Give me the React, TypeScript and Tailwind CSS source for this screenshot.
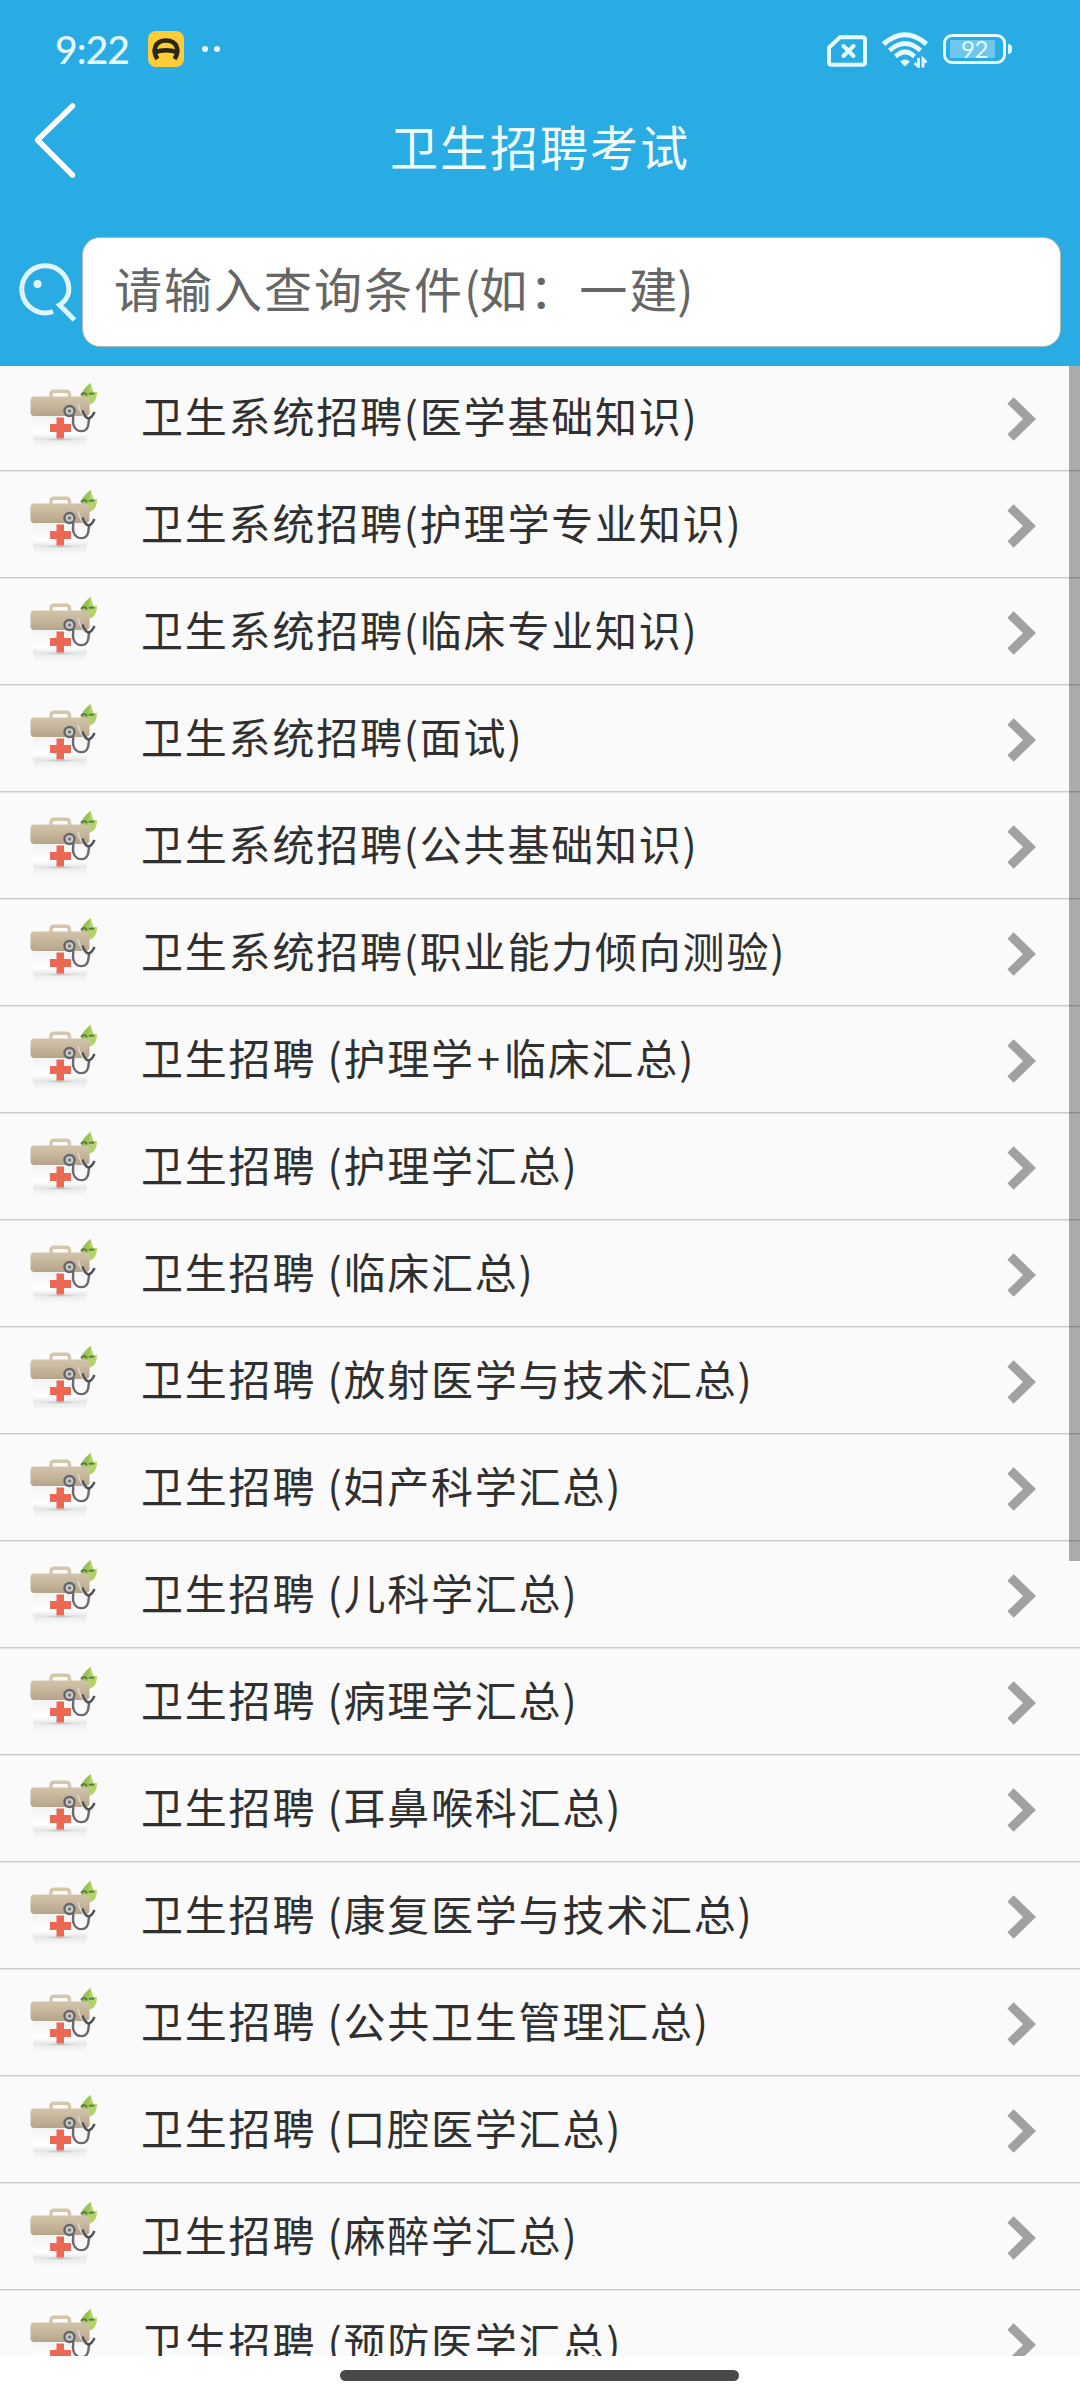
const categories = [
  "卫生系统招聘(医学基础知识)",
  "卫生系统招聘(护理学专业知识)",
  "卫生系统招聘(临床专业知识)",
  "卫生系统招聘(面试)",
  "卫生系统招聘(公共基础知识)",
  "卫生系统招聘(职业能力倾向测验)",
  "卫生招聘 (护理学+临床汇总)",
  "卫生招聘 (护理学汇总)",
  "卫生招聘 (临床汇总)",
  "卫生招聘 (放射医学与技术汇总)",
  "卫生招聘 (妇产科学汇总)",
  "卫生招聘 (儿科学汇总)",
  "卫生招聘 (病理学汇总)",
  "卫生招聘 (耳鼻喉科汇总)",
  "卫生招聘 (康复医学与技术汇总)",
  "卫生招聘 (公共卫生管理汇总)",
  "卫生招聘 (口腔医学汇总)",
  "卫生招聘 (麻醉学汇总)",
  "卫生招聘 (预防医学汇总)",
]

function StatusBar() {
  return (
    <div className="flex h-[98px] items-center justify-between pl-[55px] pr-[68px] text-[#e6fbff]">
      <div className="flex items-center">
        <span className="w-[93px] whitespace-nowrap font-['Lato',sans-serif] text-[39px] font-medium leading-none tracking-[-0.9px]">9:22</span>
        <svg className="h-9 w-9" viewBox="0 0 36 36">
          <rect width="36" height="36" rx="8" fill="#fdcc36" />
          <path d="M9.500 28C4 20 6.500 9.500 18 9.500s14 10.500 8.500 18.500" fill="none" stroke="#2b2617" strokeWidth="4.500" />
          <path d="M7 21Q18 17.500 29 21" fill="none" stroke="#2b2617" strokeWidth="4.500" />
        </svg>
        <span className="ml-[18px] h-1.5 w-1.5 rounded-full bg-[#e6fbff]"></span>
        <span className="ml-[6px] h-1.5 w-1.5 rounded-full bg-[#e6fbff]"></span>
      </div>

      <div className="flex items-center">
        <svg className="mt-[3px] h-[32px] w-[40px]" viewBox="0 0 40 32" fill="none" stroke="currentColor">
          <path d="M13 2.200H35.500Q38 2.200 38 4.700V27.300Q38 29.800 35.500 29.800H4.500Q2 29.800 2 27.300V12.500Z" strokeWidth="4" strokeLinejoin="round" />
          <path d="M16.500 11L26.500 21M26.500 11L16.500 21" strokeWidth="4" strokeLinecap="round" />
        </svg>
        <svg className="ml-[15px] mt-[1px] h-[36px] w-[46px]" viewBox="0 0 46 36" fill="none" stroke="currentColor">
          <path d="M1.500 12Q23 -6.500 44.500 12" strokeWidth="5" />
          <path d="M7.500 18.500Q23 4.500 38.500 18.500" strokeWidth="4.600" />
          <path d="M13.500 24.500Q23 15.500 32.500 24.500" strokeWidth="4.600" />
          <path d="M18 29.500Q23 25.500 28 29.500L23 34.500Z" fill="currentColor" stroke="none" />
          <path d="M36.500 26V34.500L32.500 31M41 35.500V27L44.500 30.500" strokeWidth="2.800" />
        </svg>
        <div className="ml-[15px] flex h-[30px] w-[63px] items-center rounded-[9px] border-3 border-[#e6fbff] pl-[4px]">
          <div className="flex h-[18px] w-[45px] items-center justify-center bg-[#6fc6ee] pl-[4px] font-['Lato',sans-serif] text-[24px] leading-none tracking-[-0.500px]">92</div>
        </div>
        <span className="ml-[2px] h-[10px] w-[4px] rounded-r bg-[#e6fbff]"></span>
      </div>
    </div>
  )
}

// First-aid case with a stethoscope and a leaf
function MedicalCaseIcon() {
  return (
    <svg className="ml-5 h-[90px] w-[90px] shrink-0" viewBox="0 0 90 90">
      <defs>
        <linearGradient id="lid" x1="0" y1="0" x2="0" y2="1">
          <stop offset="0" stopColor="#d2c4aa" />
          <stop offset="0.500" stopColor="#c5b69b" />
          <stop offset="1" stopColor="#b3a48a" />
        </linearGradient>
        <linearGradient id="body" x1="0" y1="0" x2="0" y2="1">
          <stop offset="0" stopColor="#f1f1f1" />
          <stop offset="0.750" stopColor="#ffffff" />
          <stop offset="1" stopColor="#e4e5e6" />
        </linearGradient>
        <linearGradient id="shade" x1="0" y1="0" x2="0" y2="1">
          <stop offset="0" stopColor="#e6e8e9" />
          <stop offset="1" stopColor="#f9f9f9" />
        </linearGradient>
        <radialGradient id="floor">
          <stop offset="0" stopColor="#b9bbbc" />
          <stop offset="1" stopColor="#e4e5e6" stopOpacity="0" />
        </radialGradient>
      </defs>
      <path d="M13 68H67L65 77H15Z" fill="url(#shade)" />
      <path d="M70.500 13C65 18 61 22 61 28Q61 35 69 35Q77 33 77 22L73.500 22Z" fill="#b0d468" />
      <path d="M71 13C68 20 70 24 67 30Q63 31 61 27Q61 20 71 13Z" fill="#98c354" />
      <path d="M61 25Q64 21 67 25M69 24Q72 23 74 24" fill="none" stroke="#5f7a46" strokeWidth="2" />
      <path d="M31 28V24Q31.500 21.200 34 21.200H46Q49 21.200 49.500 24V28" fill="none" stroke="#d4c6aa" strokeWidth="3.400" />
      <path d="M12 44H68L67 69.500H13Z" fill="url(#body)" />
      <ellipse cx="40" cy="69.500" rx="24" ry="2" fill="url(#floor)" />
      <rect x="10.500" y="26.500" width="59" height="19.500" rx="4" fill="url(#lid)" />
      <path d="M36.500 47.500h7.500v6.500h7v8h-7v6.500h-7.500v-6.500h-6.500v-8h6.500z" fill="#eb6855" />
      <path d="M58 34Q60 44 67 49" fill="none" stroke="#dcd8d0" strokeWidth="1.500" />
      <path d="M53 45C54 49 52 51 53.500 55C56 63 66 63 68 56C69 53 68 52 69.500 49" fill="none" stroke="#696a70" strokeWidth="2.400" />
      <path d="M62.500 40.500Q64 46 68 48.500Q72 48 74.500 42" fill="none" stroke="#4d4f56" strokeWidth="2.400" />
      <circle cx="49.500" cy="41" r="5" fill="#cfcdc9" stroke="#66666a" strokeWidth="2.400" />
      <circle cx="49.500" cy="41" r="1.800" fill="#77787c" />
    </svg>
  )
}

function CategoryRow({ title }: { title: string }) {
  const [before, after] = title.split("+")

  return (
    <li className="flex h-[107px] shrink-0 items-start border-b border-b-[#e6e6e6] bg-[#fafafa] pt-[5px] shadow-[inset_0_-1px_0_#cacaca] first:h-[106px] first:pt-1">
      <MedicalCaseIcon />
      <span className="ml-[31px] flex-1 whitespace-nowrap pt-[13px] text-[42px] leading-[64px] tracking-[1.800px] text-[#303030]">
        {before}
        {after && <span className="px-[2px]">+</span>}
        {after}
      </span>
      <svg className="mr-[44px] mt-[26px] h-[46px] w-[30px]" viewBox="0 0 30 46">
        <path d="M4.500 4.500L23.500 23L4.500 41.500" fill="none" stroke="#9fa1a3" strokeWidth="9" />
      </svg>
    </li>
  )
}

export default function App() {
  return (
    <div className="relative flex h-[2400px] w-[1080px] flex-col overflow-hidden bg-white font-['Noto_Sans_CJK_SC',sans-serif]">
      <header className="h-[366px] shrink-0 bg-[#29abe4]">
        <StatusBar />

        <div className="grid h-[104px] grid-cols-[120px_1fr_120px]">
          <svg className="ml-[32px] mt-[2px] h-[80px] w-[48px]" viewBox="0 0 48 80" fill="none">
            <path d="M40.500 6L5.500 40L40.500 75" stroke="#ffffff" strokeWidth="5.500" strokeLinecap="round" strokeLinejoin="round" />
          </svg>
          <h1 className="pt-[11px] text-center text-[48px] leading-[72px] tracking-[2px] text-[#f0fdff]">卫生招聘考试</h1>
        </div>

        <div className="flex pt-[35px]">
          <svg className="ml-[17px] mt-[25px] h-[62px] w-[65px] shrink-0" viewBox="0 0 65 62" fill="none" stroke="#dff5fd">
            <path d="M36 49.500A23.500 23.500 0 1 1 51.500 31Q50 38 42.500 43L57.500 58" strokeWidth="5" />
            <circle cx="20.500" cy="22" r="4" fill="#dff5fd" stroke="none" />
          </svg>
          <div className="flex h-[110px] w-[979px] items-start rounded-[18px] border border-[#b0b5b7] bg-white pl-[31px] pt-[13px] text-[48px] tracking-[2px] text-[#666666]">
            <span className="whitespace-nowrap leading-[72px]">
              请输入查询条件<span className="tracking-[-1px]">(</span>如：一建<span className="-ml-[2px]">)</span>
            </span>
          </div>
        </div>
      </header>

      <ul className="flex h-[1990px] shrink-0 flex-col overflow-hidden">
        {categories.map((title) => (
          <CategoryRow key={title} title={title} />
        ))}
      </ul>

      {/* Scroll position */}
      <div className="absolute right-0 top-[366px] h-[1195px] w-[11px] bg-black/31"></div>

      {/* Home gesture bar */}
      <div className="flex flex-1 pl-[340px] pt-[14px]">
        <div className="h-[11px] w-[399px] rounded-full bg-[#484848]"></div>
      </div>
    </div>
  )
}
